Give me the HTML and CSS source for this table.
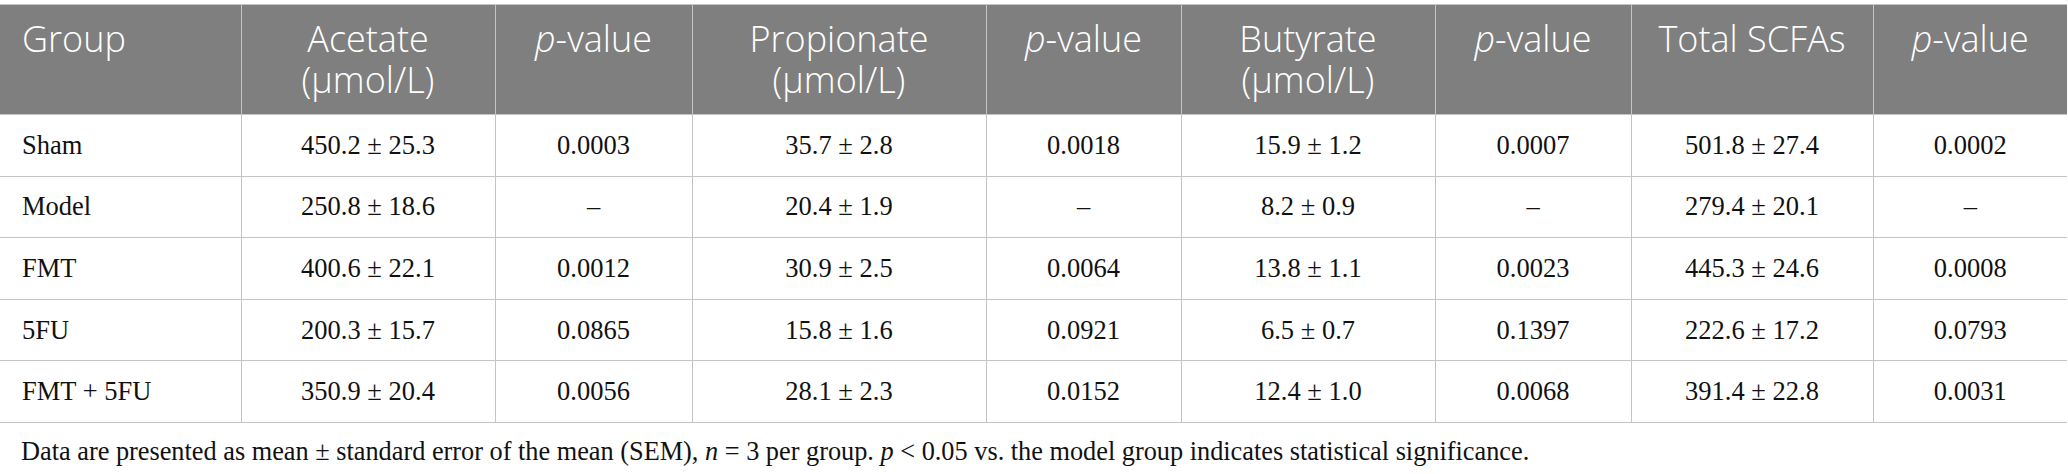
FILE: index.html
```html
<!DOCTYPE html>
<html lang="en">
<head>
<meta charset="utf-8">
<title>SCFA table</title>
<link rel="stylesheet" href="styles.css">
</head>
<body>
<div class="wrap">
<table class="data">
<colgroup>
<col class="c-group"><col class="c-ace"><col class="c-p1"><col class="c-pro"><col class="c-p2"><col class="c-but"><col class="c-p3"><col class="c-tot"><col class="c-p4">
</colgroup>
<thead>
<tr>
<th class="left">Group</th>
<th>Acetate<br>(μmol/L)</th>
<th><i>p</i>-value</th>
<th>Propionate<br>(μmol/L)</th>
<th><i>p</i>-value</th>
<th>Butyrate<br>(μmol/L)</th>
<th><i>p</i>-value</th>
<th>Total SCFAs</th>
<th><i>p</i>-value</th>
</tr>
</thead>
<tbody>
<tr><td class="left">Sham</td><td>450.2 ± 25.3</td><td>0.0003</td><td>35.7 ± 2.8</td><td>0.0018</td><td>15.9 ± 1.2</td><td>0.0007</td><td>501.8 ± 27.4</td><td>0.0002</td></tr>
<tr><td class="left">Model</td><td>250.8 ± 18.6</td><td>–</td><td>20.4 ± 1.9</td><td>–</td><td>8.2 ± 0.9</td><td>–</td><td>279.4 ± 20.1</td><td>–</td></tr>
<tr><td class="left">FMT</td><td>400.6 ± 22.1</td><td>0.0012</td><td>30.9 ± 2.5</td><td>0.0064</td><td>13.8 ± 1.1</td><td>0.0023</td><td>445.3 ± 24.6</td><td>0.0008</td></tr>
<tr><td class="left">5FU</td><td>200.3 ± 15.7</td><td>0.0865</td><td>15.8 ± 1.6</td><td>0.0921</td><td>6.5 ± 0.7</td><td>0.1397</td><td>222.6 ± 17.2</td><td>0.0793</td></tr>
<tr><td class="left">FMT + 5FU</td><td>350.9 ± 20.4</td><td>0.0056</td><td>28.1 ± 2.3</td><td>0.0152</td><td>12.4 ± 1.0</td><td>0.0068</td><td>391.4 ± 22.8</td><td>0.0031</td></tr>
</tbody>
</table>
<p class="note">Data are presented as mean ± standard error of the mean (SEM), <i>n</i> = 3 per group. <i>p</i> &lt; 0.05 vs. the model group indicates statistical significance.</p>
</div>
</body>
</html>
```
FILE: styles.css
```css
html, body {
  margin: 0;
  padding: 0;
  background: #ffffff;
}
.wrap {
  padding-top: 4px;
  width: 2068px;
}
.data {
  border-collapse: collapse;
  table-layout: fixed;
  width: 2067px;
  border-top: 1px solid #c4c4c4;
  border-bottom: 1px solid #c4c4c4;
}
.c-group { width: 241px; }
.c-ace { width: 254px; }
.c-p1 { width: 197px; }
.c-pro { width: 294px; }
.c-p2 { width: 195px; }
.c-but { width: 254px; }
.c-p3 { width: 196px; }
.c-tot { width: 242px; }
.c-p4 { width: 194px; }
.data th {
  background: #7f7f7f;
  color: #ffffff;
  font-family: "Open Sans", "DejaVu Sans", sans-serif;
  font-weight: 300;
  font-size: 36px;
  line-height: 41px;
  height: 110px;
  box-sizing: border-box;
  padding: 13px 8px 0;
  vertical-align: top;
  text-align: center;
  border-left: 1px solid #c4c4c4;
  border-bottom: 1px solid #c4c4c4;
}
.data th:first-child, .data td:first-child {
  border-left: none;
}
.data td {
  font-family: "Liberation Serif", "Times New Roman", serif;
  font-size: 26.5px;
  color: #111111;
  height: 61.6px;
  box-sizing: border-box;
  padding: 0 8px;
  text-align: center;
  vertical-align: middle;
  border-left: 1px solid #c4c4c4;
  border-top: 1px solid #c4c4c4;
}
.data .left {
  text-align: left;
  padding-left: 22px;
}
.note {
  margin: 14px 0 0;
  padding-left: 21px;
  font-family: "Liberation Serif", "Times New Roman", serif;
  font-size: 26.3px;
  line-height: 30px;
  color: #111111;
}
```
